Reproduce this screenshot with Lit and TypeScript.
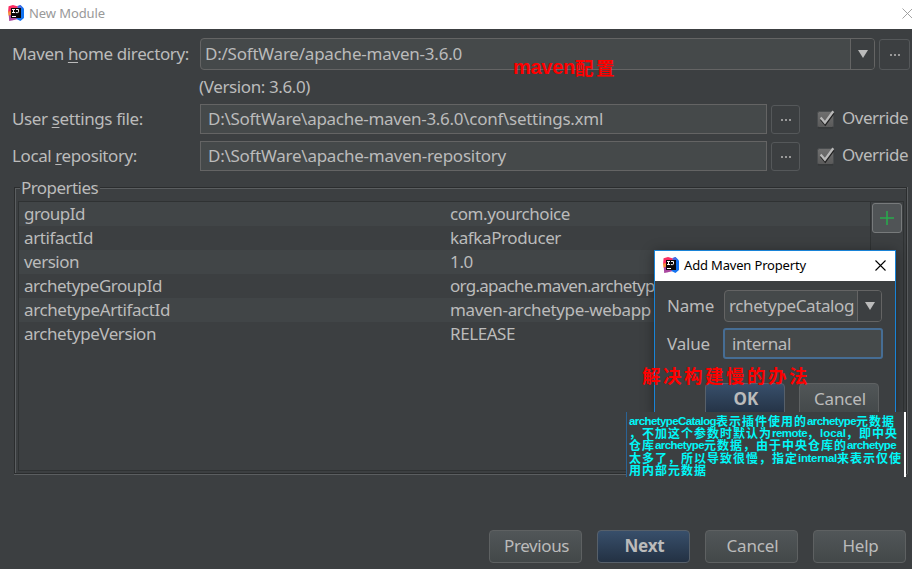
import { LitElement, html, css, svg } from "lit";
import { customElement, property } from "lit/decorators.js";

/** Text whose tracking is adjusted so that it takes up a given advance width. */
@customElement("fit-text")
class FitText extends LitElement {
  static styles = css`
    :host { display: inline-block; white-space: pre; flex: none; }
    span { display: inline-block; }
    ::slotted(u) { text-underline-offset: 2px; text-decoration-thickness: 1px; text-decoration-skip-ink: none; }
  `;
  @property({ type: Number }) w = 0;
  render() { return html`<span><slot></slot></span>`; }
  firstUpdated() {
    const natural = this.renderRoot.querySelector("span")!.getBoundingClientRect().width;
    const n = (this.textContent ?? "").length;
    if (this.w && n) this.style.letterSpacing = (this.w - natural) / n + "px";
  }
}

@customElement("idea-logo")
class IdeaLogo extends LitElement {
  static styles = css`:host { display: block; width: 16px; height: 16px; flex: none; } svg { display: block; }`;
  render() {
    return html`<svg width="16" height="16" viewBox="0 0 16 16">
      <path d="M.6 1.2 5 0l5 1.5L9 9 0 7.5z" fill="#fb2d62"/>
      <path d="M0 6.5 5 6v7l-4.6-2.5z" fill="#f58a3c"/>
      <path d="M.8 10.5 6 9l4 5-6 1.4-2.8.6z" fill="#a9479f"/>
      <path d="M10 1.3 12.6 0 16 3.5V13l-3.6 3L8.5 14z" fill="#1473f0"/>
      <path d="M9.5 1l2.9-1L14 3l-4 1z" fill="#4a66e0"/>
      <path d="M3 3h10v10H3z" fill="#0b0809"/>
      <path d="M4 4.5h3M5.5 4.5v3.3M4 7.5h3M8 4.5h2.5v2.3q0 .8-1 .8H7.8M4 11.5h4" stroke="#fff" stroke-width="1" fill="none"/>
    </svg>`;
  }
}

const arrow = html`<svg class="arrow" width="10" height="8" viewBox="0 0 10 8"><path d="M0 0h10L5 8z" fill="#bbbbbb"/></svg>`;
const cross = (size: number) => html`<svg width="11" height="11" viewBox="0 0 11 11">
  <path d="M.5 .5l10 10M10.5 .5l-10 10" stroke="currentColor" stroke-width=${size} fill="none"/></svg>`;
const dots = html`<svg width="10" height="2" viewBox="0 0 10 2">${[0, 4, 8].map((x) => svg`<rect x=${x} width="2" height="2" fill="#999"/>`)}</svg>`;
const check = html`<svg class="check" width="20" height="20" viewBox="0 0 20 20">
  <defs><linearGradient id="box" x2="0" y2="1"><stop stop-color="#707070"/><stop offset="1" stop-color="#595959"/></linearGradient></defs>
  <rect x="1.5" y="2.5" width="16" height="16" rx="2" fill="url(#box)" stroke="#4a4d4f"/>
  <path d="M2 18.8h15" stroke="#2f3234"/>
  <path d="M5 10.2l4.2 5L17.5 4" stroke="#202020" stroke-width="2.4" fill="none"/>
  <path d="M4.6 8.6l4.3 5L17.3 2.2" stroke="#b8b8b8" stroke-width="2.3" fill="none"/>
</svg>`;

const properties: [string, number, string, number][] = [
  ["groupId", 61, "com.yourchoice", 120],
  ["artifactId", 69, "kafkaProducer", 111],
  ["version", 55, "1.0", 23],
  ["archetypeGroupId", 138, "org.apache.maven.archetypes", 221],
  ["archetypeArtifactId", 146, "maven-archetype-webapp", 201],
  ["archetypeVersion", 132, "RELEASE", 65],
];

const note = [
  "archetypeCatalog表示插件使用的archetype元数据",
  "，不加这个参数时默认为remote，local，即中央",
  "仓库archetype元数据，由于中央仓库的archetype",
  "太多了，所以导致很慢，指定internal来表示仅使",
  "用内部元数据",
];
const wordWidths: Record<string, number> = { archetypeCatalog: 87, archetype: 49, remote: 35, local: 26, internal: 39 };

@customElement("app-root")
class AppRoot extends LitElement {
  static styles = css`
    :host { display: block; }
    * { box-sizing: border-box; }
    .window { position: relative; width: 912px; height: 569px; overflow: hidden; background: #3c3f41; color: #bbbbbb;
      font: 17px/24px "Noto Sans", "Noto Sans CJK SC", sans-serif; display: flex; flex-direction: column; }
    .title { height: 29px; flex: none; background: #fff; color: #999; display: flex; align-items: center; padding: 0 0 3px 8px; font-size: 13px; }
    .title fit-text { margin-left: 5px; line-height: 20px; }
    .title svg { margin-left: auto; margin-right: -1px; }
    .form { display: grid; grid-template-columns: 200px 1fr; grid-template-rows: 41px 26px 37px 45px; padding-top: 9px; flex: none; }
    .label { padding: 2px 0 0 12px; }
    .label.first { padding-top: 4px; }
    .line { display: flex; align-items: flex-start; }
    .combo { height: 32px; border: 1px solid #646464; border-radius: 4px; background: #45494a; display: flex; overflow: hidden; }
    .combo .value { flex: 1; padding: 3px 0 0 4px; overflow: hidden; }
    .combo .drop { width: 24px; border-left: 1px solid #646464; background: #3c3f41; display: flex; align-items: center; justify-content: center; }
    .main { width: 675px; }
    .field { width: 567px; height: 30px; margin-top: -1px; border: 1px solid #646464; background: #45494a; padding: 2px 0 0 7px; }
    .more { width: 29px; height: 29px; margin-left: 4px; border: 1px solid #55585a; border-radius: 3px; display: flex; align-items: center; justify-content: center; }
    .more.big { width: 31px; height: 31px; margin-top: 1px; }
    .version { margin: -4px 0 0 -1px; }
    .check { margin: 4px 0 0 16px; flex: none; }
    .check + fit-text { margin: 1px 0 0 6px; }
    .group { position: relative; flex: none; margin: 0 5px 0 14px; height: 287px; border: 1px solid #2b2d2e; box-shadow: inset 1px 1px #5b5e60, 0 1px #5b5e60, 1px 0 #5b5e60; padding: 13px 2px 2px 3px; }
    .legend { position: absolute; left: 5px; top: -12px; background: #3c3f41; padding: 0 2px 0 1px; height: 24px; }
    .inner { height: 100%; border: 1px solid #2f3233; display: flex; }
    .table { flex: 1; border-right: 1px solid #2f3233; }
    .row { display: grid; grid-template-columns: 426px 1fr; height: 24px; padding-left: 5px; line-height: 24px; }
    .row:nth-child(odd) { background: #414547; }
    .tools { width: 32px; padding: 1px; }
    .tool { height: 30px; border: 1px solid #777a7b; border-radius: 3px; background: #505456; display: flex; align-items: center; justify-content: center; }
    .footer { margin: 56px 6px 0 auto; display: flex; gap: 15px; }
    .button { width: 93px; height: 33px; border: 1px solid #5e6162; border-radius: 4px; background: linear-gradient(#515658, #434849); display: flex; justify-content: center; padding: 3px 0 0 2px; }
    .primary { background: linear-gradient(#384f6b, #233143); border-color: #57606a; font-weight: 700; }
    .dialog { position: absolute; left: 654px; top: 250px; width: 242px; height: 164px; border: 1px solid #1883d7; border-bottom: 0; background: #3c3f41; box-shadow: 0 2px 12px rgba(0,0,0,.4); }
    .dialog .title { height: 30px; color: #000; padding: 0 0 2px 8px; }
    .dialog .title svg { margin-right: 9px; }
    .pair { display: grid; grid-template-columns: 57px 1fr; padding: 9px 13px 0 11px; }
    .pair .name { padding: 4px 0 0 1px; }
    .pair .combo { margin-left: 1px; }
    .pair + .pair { padding: 6px 12px 0 11px; }
    .focus { height: 31px; border: 2px solid #466d94; border-radius: 3px; background: #45494a; padding: 2px 0 0 7px; }
    .actions { display: flex; gap: 14px; padding: 24px 0 0 50px; }
    .actions .button { width: 80px; }
    .red { position: absolute; color: #ff0000; font-weight: 700; line-height: 24px; display: flex; }
    .one { left: 513px; top: 55px; font-family: "Noto Sans CJK SC", sans-serif; font-size: 18.5px; }
    .one .latin { font-family: "Liberation Sans", sans-serif; font-size: 20px; }
    .two { left: 642px; top: 363px; font-family: "Noto Sans CJK SC", sans-serif; font-size: 18.5px; }
    .note { position: absolute; left: 626px; top: 412px; width: 280px; height: 65px; background: #3c3f41; border-left: 1px solid #2a6396; border-right: 2px solid #fff;
      color: #00f8f8; font: 700 12px/12.2px "Noto Sans CJK SC", sans-serif; padding: 3px 0 0 2px; }
    .note .text { display: flex; height: 12.2px; }
    .note .latin { font-family: "Liberation Sans", sans-serif; font-size: 11.5px; line-height: 13px; }
  `;

  private path(text: string, w: number) {
    return html`<div class="line"><div class="field"><fit-text w=${w}>${text}</fit-text></div><div class="more">${dots}</div>${check}<fit-text w="66">Override</fit-text></div>`;
  }

  private noteLine(text: string) {
    const runs = text.match(/[a-zA-Z]+|[^a-zA-Z]+/g) ?? [];
    return html`<div class="text">${runs.map((r) => wordWidths[r]
      ? html`<fit-text class="latin" w=${wordWidths[r]}>${r}</fit-text>`
      : html`<fit-text w=${r.length * 13}>${r}</fit-text>`)}</div>`;
  }

  render() {
    return html`<div class="window">
      <div class="title"><idea-logo></idea-logo><fit-text w="76">New Module</fit-text>${cross(0.9)}</div>
      <div class="form">
        <div class="label first"><fit-text w="177">Maven <u>h</u>ome directory:</fit-text></div>
        <div class="line"><div class="combo main"><div class="value"><fit-text w="257">D:/SoftWare/apache-maven-3.6.0</fit-text></div><div class="drop">${arrow}</div></div><div class="more big">${dots}</div></div>
        <div></div>
        <div class="version"><fit-text w="111">(Version: 3.6.0)</fit-text></div>
        <div class="label"><fit-text w="131">User <u>s</u>ettings file:</fit-text></div>
        ${this.path("D:\\SoftWare\\apache-maven-3.6.0\\conf\\settings.xml", 395)}
        <div class="label"><fit-text w="125">Local <u>r</u>epository:</fit-text></div>
        ${this.path("D:\\SoftWare\\apache-maven-repository", 298)}
      </div>
      <div class="group">
        <div class="legend"><fit-text w="77">Properties</fit-text></div>
        <div class="inner">
          <div class="table">${properties.map(([k, kw, v, vw]) => html`<div class="row"><fit-text w=${kw}>${k}</fit-text><fit-text w=${vw}>${v}</fit-text></div>`)}</div>
          <div class="tools">
            <div class="tool"><svg width="16" height="16" viewBox="0 0 16 16"><path d="M8 1v14M1 8h14" stroke="#29a94c" stroke-width="1.6"/></svg></div>
          </div>
        </div>
      </div>
      <div class="footer">
        <div class="button"><fit-text w="65">Previous</fit-text></div>
        <div class="button primary"><fit-text w="40">Next</fit-text></div>
        <div class="button"><fit-text w="52">Cancel</fit-text></div>
        <div class="button"><fit-text w="36">Help</fit-text></div>
      </div>
      <div class="dialog">
        <div class="title"><idea-logo></idea-logo><fit-text w="122">Add Maven Property</fit-text>${cross(1.1)}</div>
        <div class="pair"><div class="name"><fit-text w="47">Name</fit-text></div><div class="combo"><div class="value"><fit-text w="125">rchetypeCatalog</fit-text></div><div class="drop">${arrow}</div></div></div>
        <div class="pair"><div class="name"><fit-text w="43">Value</fit-text></div><div class="focus"><fit-text w="59">internal</fit-text></div></div>
        <div class="actions"><div class="button primary"><fit-text w="25">OK</fit-text></div><div class="button"><fit-text w="52">Cancel</fit-text></div></div>
      </div>
      <div class="red one"><fit-text class="latin" w="62">maven</fit-text><fit-text w="42">配置</fit-text></div>
      <div class="red two"><fit-text w="168">解决构建慢的办法</fit-text></div>
      <div class="note">${note.map((t) => this.noteLine(t))}</div>
    </div>`;
  }
}
